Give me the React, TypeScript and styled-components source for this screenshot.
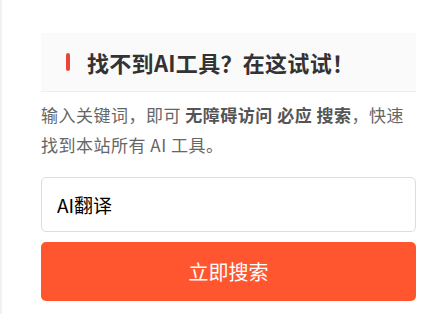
import React from "react";
import styled, { createGlobalStyle } from "styled-components";

const Global = createGlobalStyle`
  html, body { margin: 0; padding: 0; background: #fff; }
  body { font-family: "Noto Sans CJK SC", "Noto Sans", sans-serif; }
`;

const Page = styled.div`
  min-height: 314px;
  box-sizing: border-box;
  border-left: 2px solid #f1f1f1;
  padding: 33px 24px 0 39px;
`;

const Panel = styled.section`
  width: 375px;
  display: flex;
  flex-direction: column;
`;

const Header = styled.div`
  height: 58px;
  background: #fafafa;
  border-bottom: 1px solid #eeeeee;
  display: flex;
  align-items: center;
  padding-left: 25px;
  gap: 17px;
`;

const Mark = styled.span`
  width: 4px;
  height: 18px;
  border-radius: 2px;
  background: #e8463a;
`;

const Title = styled.h2`
  margin: 0;
  font-size: 22px;
  font-weight: 700;
  color: #333;
  line-height: 1;
  letter-spacing: 0.3px;
`;

const Desc = styled.p`
  margin: 8px 0 0;
  font-size: 17px;
  line-height: 30px;
  letter-spacing: 0.5px;
  color: #666;
`;

const Strong = styled.b`
  font-weight: 700;
  color: #555;
`;

const Input = styled.input`
  margin-top: 17px;
  height: 55px;
  box-sizing: border-box;
  border: 1px solid #dddddd;
  border-radius: 5px;
  padding: 0 15px;
  font-family: inherit;
  font-size: 19px;
  color: #000;
  outline: none;
  background: #fff;
`;

const Button = styled.button`
  margin-top: 10px;
  height: 59px;
  border: none;
  border-radius: 5px;
  background: #ff5630;
  color: #fff;
  font-family: inherit;
  font-size: 20px;
  cursor: pointer;
`;

export default function App() {
  return (
    <>
      <Global />
      <Page>
        <Panel>
          <Header>
            <Mark />
            <Title>找不到AI工具？在这试试！</Title>
          </Header>
          <Desc>
            输入关键词，即可 <Strong>无障碍访问 必应 搜索</Strong>，快速找到本站所有 AI 工具。
          </Desc>
          <Input defaultValue="AI翻译" />
          <Button>立即搜索</Button>
        </Panel>
      </Page>
    </>
  );
}
